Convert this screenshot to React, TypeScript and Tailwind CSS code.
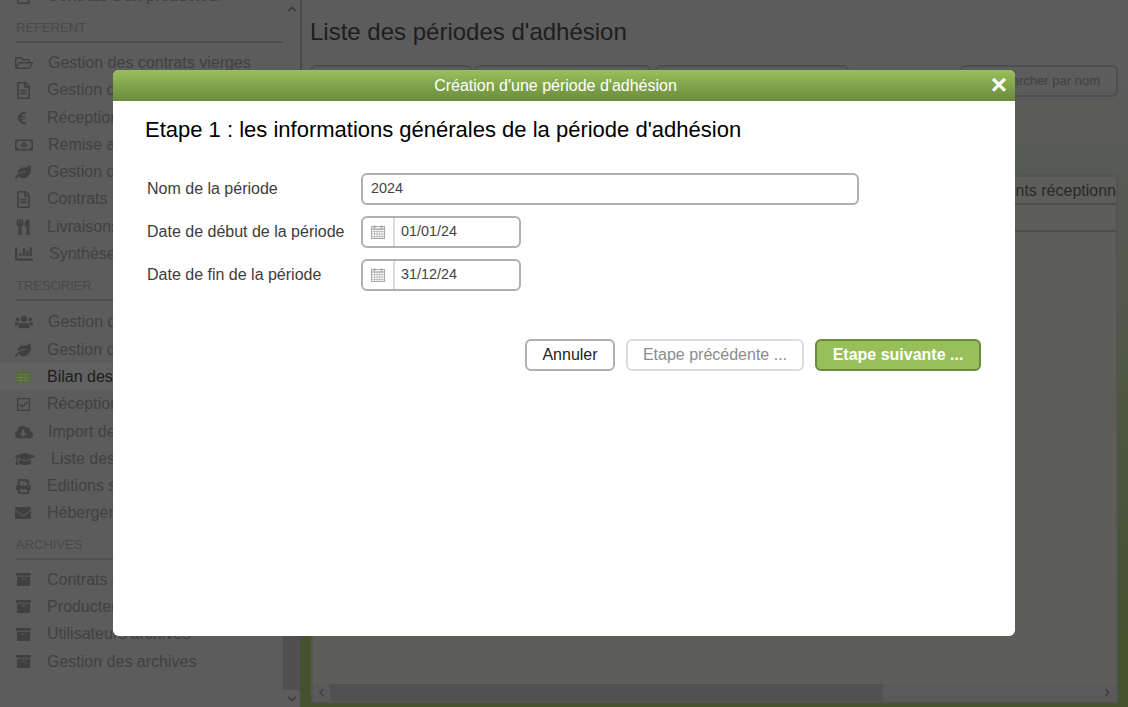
import { FaRegFolderOpen, FaRegFileAlt, FaEuroSign, FaRegMoneyBillAlt, FaLeaf, FaUtensils, FaChartBar, FaUsers, FaRegCheckSquare, FaCloudDownloadAlt, FaGraduationCap, FaPrint, FaEnvelope, FaArchive, FaChevronUp, FaChevronDown, FaChevronLeft, FaChevronRight } from 'react-icons/fa';
import type { IconType } from 'react-icons';

type Item = { icon: IconType | typeof GridIcon; label: string; textOffset: string; iconSize?: string; active?: boolean };

function GridIcon({ className }: { className?: string }) {
  return (
    <svg viewBox="0 0 16 14" className={className}>
      <rect x="0.5" y="0.5" width="15" height="13" fill="#56693a" />
      <path d="M1 4.5h14M1 7.5h14M1 10.5h14M5.5 4v9M10.5 4v9" stroke="#6c7d50" strokeWidth="1" fill="none" />
    </svg>
  );
}

function CalendarIcon() {
  return (
    <svg viewBox="0 0 14 14" className="h-[14px] w-[14px]">
      <path d="M3.5 0.5v2.5M10.5 0.5v2.5" stroke="#a0a0a0" strokeWidth="1.6" />
      <rect x="0.5" y="1.5" width="13" height="12" fill="none" stroke="#a8a8a8" />
      <path d="M1 4h12" stroke="#a8a8a8" strokeWidth="1.4" />
      <path d="M1 6.5h12M1 9h12M1 11.5h12M3.5 5v8M6 5v8M8.5 5v8M11 5v8" stroke="#b8b8b8" strokeWidth="0.8" />
    </svg>
  );
}

const referent: Item[] = [
  { icon: FaRegFolderOpen, label: 'Gestion des contrats vierges', textOffset: 'ml-[15px]', iconSize: 'h-[18px] w-[18px]' },
  { icon: FaRegFileAlt, label: 'Gestion des contrats signés', textOffset: 'ml-[14px]', iconSize: 'ml-[1px] h-[17px] w-[15px]' },
  { icon: FaEuroSign, label: 'Réception des chèques', textOffset: 'ml-[14px]', iconSize: 'ml-[2px] h-[14px] w-[10px]' },
  { icon: FaRegMoneyBillAlt, label: 'Remise aux producteurs', textOffset: 'ml-[15px]', iconSize: 'h-[18px] w-[18px]' },
  { icon: FaLeaf, label: 'Gestion des producteurs', textOffset: 'ml-[14px]', iconSize: 'h-4 w-4' },
  { icon: FaRegFileAlt, label: 'Contrats signés', textOffset: 'ml-[14px]', iconSize: 'ml-[1px] h-[17px] w-[15px]' },
  { icon: FaUtensils, label: 'Livraisons', textOffset: 'ml-[14px]', iconSize: 'ml-[1px] h-4 w-[14px]' },
  { icon: FaChartBar, label: 'Synthèses', textOffset: 'ml-[16px]', iconSize: 'h-[18px] w-[18px]' },
];

const tresorier: Item[] = [
  { icon: FaUsers, label: 'Gestion des adhérents', textOffset: 'ml-[15px]', iconSize: 'h-[18px] w-[18px]' },
  { icon: FaLeaf, label: 'Gestion des cotisations', textOffset: 'ml-[14px]', iconSize: 'h-4 w-4' },
  { icon: GridIcon, label: 'Bilan des adhésions', textOffset: 'ml-[14px]', iconSize: 'ml-[1px] h-[14px] w-[15px]', active: true },
  { icon: FaRegCheckSquare, label: 'Réception des paiements', textOffset: 'ml-[14px]', iconSize: 'ml-[1px] h-[15px] w-[15px]' },
  { icon: FaCloudDownloadAlt, label: 'Import des paiements', textOffset: 'ml-[15px]', iconSize: 'h-[18px] w-[18px]' },
  { icon: FaGraduationCap, label: 'Liste des formations', textOffset: 'ml-[18px]', iconSize: 'h-[20px] w-[20px] shrink-0' },
  { icon: FaPrint, label: 'Editions spécifiques', textOffset: 'ml-[14px]', iconSize: 'ml-[1px] h-[15px] w-[15px]' },
  { icon: FaEnvelope, label: 'Hébergement mails', textOffset: 'ml-[14px]', iconSize: 'h-4 w-4' },
];

const archives: Item[] = [
  { icon: FaArchive, label: 'Contrats archivés', textOffset: 'ml-[14px]', iconSize: 'ml-[1px] h-[15px] w-[15px]' },
  { icon: FaArchive, label: 'Producteurs archivés', textOffset: 'ml-[14px]', iconSize: 'ml-[1px] h-[15px] w-[15px]' },
  { icon: FaArchive, label: 'Utilisateurs archivés', textOffset: 'ml-[14px]', iconSize: 'ml-[1px] h-[15px] w-[15px]' },
  { icon: FaArchive, label: 'Gestion des archives', textOffset: 'ml-[14px]', iconSize: 'ml-[1px] h-[15px] w-[15px]' },
];

function Row({ item }: { item: Item }) {
  const Icon = item.icon;
  return (
    <div className={`flex h-[27.3px] items-center pl-[15px] text-[16px] ${item.active ? 'bg-[#616161] text-[#1c1c1c]' : 'text-[#414141]'}`}>
      <span className="flex w-[18px] shrink-0 items-center justify-start">
        <Icon className={`text-[#404040] ${item.iconSize ?? 'h-4 w-4'}`} />
      </span>
      <span className={`whitespace-nowrap ${item.textOffset}`}>{item.label}</span>
    </div>
  );
}

function Section({ title, items, top, rowsTop }: { title: string; items: Item[]; top: string; rowsTop: string }) {
  return (
    <div className={top}>
      <div className="ml-4 h-[29px] border-b-2 border-[#4f4f4f] text-[13px] leading-[27px] text-[#494949]">{title}</div>
      <div className={rowsTop}>
        {items.map((it) => (
          <Row key={it.label} item={it} />
        ))}
      </div>
    </div>
  );
}

function DateField({ value }: { value: string }) {
  return (
    <div className="flex h-8 w-40 items-center rounded-md border-2 border-[#b0b0b0] bg-white">
      <span className="flex h-full w-[32px] items-center justify-center border-r-2 border-[#dcdcdc]">
        <CalendarIcon />
      </span>
      <span className="pl-[6px] text-[14.4px] text-[#444]">{value}</span>
    </div>
  );
}

export default function App() {
  return (
    <div className="relative flex h-[707px] w-[1128px] overflow-hidden bg-[#5c5c5c] font-['Liberation_Sans',Arial,sans-serif]">
      {/* page behind the dialog, already darkened */}
      <aside className="flex h-full w-[300px] shrink-0 overflow-hidden">
        <nav className="w-[283px] shrink-0">
          <div className="-mt-[18px]">
            <Row item={{ icon: FaRegFileAlt, label: "Contrats d'un producteur", textOffset: 'ml-[14px]', iconSize: 'ml-[1px] h-[17px] w-[15px]' }} />
          </div>
          <Section title="REFERENT" items={referent} top="mt-[5px]" rowsTop="mt-[6px]" />
          <Section title="TRESORIER" items={tresorier} top="mt-[4px]" rowsTop="mt-[8px]" />
          <Section title="ARCHIVES" items={archives} top="mt-[4px]" rowsTop="mt-[6px]" />
        </nav>
        <div className="flex w-[17px] shrink-0 flex-col items-center text-[#3d3d3d]">
          <div className="flex h-[17px] shrink-0 items-center justify-center">
            <FaChevronUp className="h-[10px] w-[10px]" />
          </div>
          <div className="mt-auto h-[590px] w-full bg-[#505050]" />
          <div className="flex h-[17px] shrink-0 items-center justify-center">
            <FaChevronDown className="h-[10px] w-[10px]" />
          </div>
        </div>
      </aside>
      <div className="flex min-w-0 flex-1 bg-gradient-to-b from-[#5c5c5c] from-[10%] to-[#445230] to-[90%]">
        <div className="h-[640px] w-[2px] shrink-0 bg-[#4a4a4a]" />
        <main className="flex min-w-0 flex-1 flex-col pt-[17px] pr-[10px] pb-[4px] pl-[8px]">
          <h1 className="text-[24px] leading-[30px] font-normal text-[#1e1e1e]">Liste des périodes d'adhésion</h1>
          <div className="mt-[18px] flex">
            <div className="h-8 w-[162px] rounded-md border-2 border-[#4e4e4e]" />
            <div className="ml-[2px] h-8 w-[177px] rounded-md border-2 border-[#4e4e4e]" />
            <div className="ml-[4px] h-8 w-[194px] rounded-md border-2 border-[#4e4e4e]" />
            <div className="ml-auto flex h-8 w-[158px] items-center justify-end rounded-md border-2 border-[#4e4e4e] pr-4 text-[13px] text-[#404040]">
              Rechercher par nom
            </div>
          </div>
          <div className="mt-[78px] ml-[1px] flex min-h-0 flex-1 flex-col overflow-hidden border-2 border-[#545454] bg-[#5d5d5a]">
            <div className="flex h-[28px] shrink-0 items-center justify-end overflow-hidden border-b-2 border-[#4e4e4e] pt-[2px] text-[16px] whitespace-nowrap text-[#2a2a2a]">
              Paiements réceptionn
            </div>
            <div className="h-[27px] shrink-0 border-b-2 border-[#4e4e4e]" />
            <div className="flex-1" />
            <div className="flex h-[17px] shrink-0 items-center bg-[#5a5a5a] text-[#3d3d3d]">
              <span className="flex w-[17px] justify-center"><FaChevronLeft className="h-[9px] w-[9px]" /></span>
              <span className="h-full w-[553px] bg-[#515151]" />
              <span className="ml-auto flex w-[17px] justify-center"><FaChevronRight className="h-[9px] w-[9px]" /></span>
            </div>
          </div>
        </main>
      </div>

      {/* dialog */}
      <div className="absolute top-[70px] left-[113px] flex h-[566px] w-[902px] flex-col overflow-hidden rounded-md bg-white">
        <div className="relative flex h-[31px] shrink-0 items-center justify-center bg-gradient-to-b from-[#98c05a] to-[#6b8b3e] pr-[17px] text-[16px] text-white">
          Création d'une période d'adhésion
          <span className="absolute top-0 right-[8px] text-[28px] leading-[30px] font-bold">×</span>
        </div>
        <div className="flex flex-col pt-[16px] pr-[34px] pl-[32px]">
          <h2 className="text-[22px] leading-[26px] font-normal text-black">Etape 1 : les informations générales de la période d'adhésion</h2>
          <div className="mt-[30px] flex flex-col gap-[11px] pl-[2px] text-[16px] text-[#3c3c3c]">
            <div className="flex items-center">
              <label className="w-[214px]">Nom de la période</label>
              <div className="flex h-8 w-[498px] items-center rounded-md border-2 border-[#b0b0b0] pl-[8px] text-[14.4px] text-[#444]">2024</div>
            </div>
            <div className="flex items-center">
              <label className="w-[214px]">Date de début de la période</label>
              <DateField value="01/01/24" />
            </div>
            <div className="flex items-center">
              <label className="w-[214px]">Date de fin de la période</label>
              <DateField value="31/12/24" />
            </div>
          </div>
          <div className="mt-[48px] flex justify-end gap-[11px] text-[16px]">
            <button className="h-8 w-[90px] rounded-md border-2 border-[#b0b0b0] bg-white text-[#222]">Annuler</button>
            <button className="h-8 w-[178px] rounded-md border-2 border-[#dcdcdc] bg-white text-[#8c8c8c]">Etape précédente ...</button>
            <button className="h-8 w-[166px] rounded-md border-2 border-[#6a8a3c] bg-[#98c05a] font-bold text-white">Etape suivante ...</button>
          </div>
        </div>
      </div>
    </div>
  );
}
